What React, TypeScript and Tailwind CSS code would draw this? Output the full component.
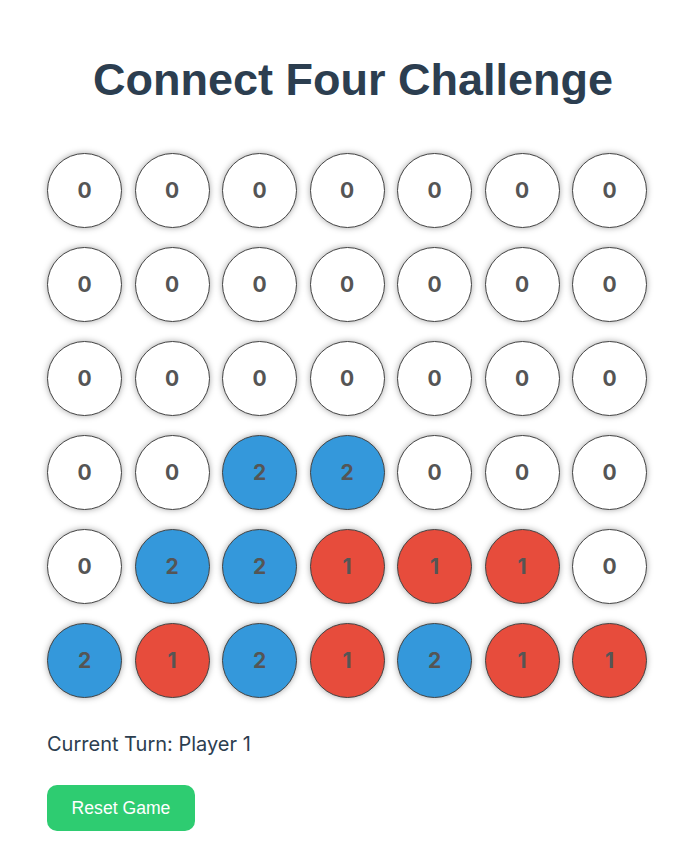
const board: number[][] = [
  [0, 0, 0, 0, 0, 0, 0],
  [0, 0, 0, 0, 0, 0, 0],
  [0, 0, 0, 0, 0, 0, 0],
  [0, 0, 2, 2, 0, 0, 0],
  [0, 2, 2, 1, 1, 1, 0],
  [2, 1, 2, 1, 2, 1, 1],
];

function Cell({ value }: { value: number }) {
  const bg = value === 1 ? 'bg-[#e74c3c]' : value === 2 ? 'bg-[#3498db]' : 'bg-white';
  return (
    <div
      className={`w-[75px] h-[75px] rounded-full border border-[#444] ${bg} shadow-[0_0_6px_rgba(0,0,0,0.35)] flex items-center justify-center text-[21px] font-bold text-[#555] font-['Inter',sans-serif]`}
    >
      {value}
    </div>
  );
}

export default function App() {
  return (
    <div className="min-h-screen bg-white">
      <div className="w-[600px] ml-[47px]">
        <h1 className="pt-[56px] pl-[12px] text-center text-[45px] leading-[48px] font-bold text-[#2c3e50] font-['Liberation_Sans',Arial,sans-serif]">
          Connect Four Challenge
        </h1>
        <div className="mt-[49px] grid grid-cols-7 gap-x-[12.5px] gap-y-[19px]">
          {board.flatMap((row, r) => row.map((v, c) => <Cell key={`${r}-${c}`} value={v} />))}
        </div>
        <p className="mt-[33px] text-[20px] leading-[26px] text-[#2c3e50] font-['Inter',sans-serif]">
          Current Turn: Player 1
        </p>
        <button className="mt-[28px] w-[148px] h-[46px] rounded-[10px] bg-[#2ecc71] text-white text-[17.6px] font-['Liberation_Sans',Arial,sans-serif]">
          Reset Game
        </button>
      </div>
    </div>
  );
}
